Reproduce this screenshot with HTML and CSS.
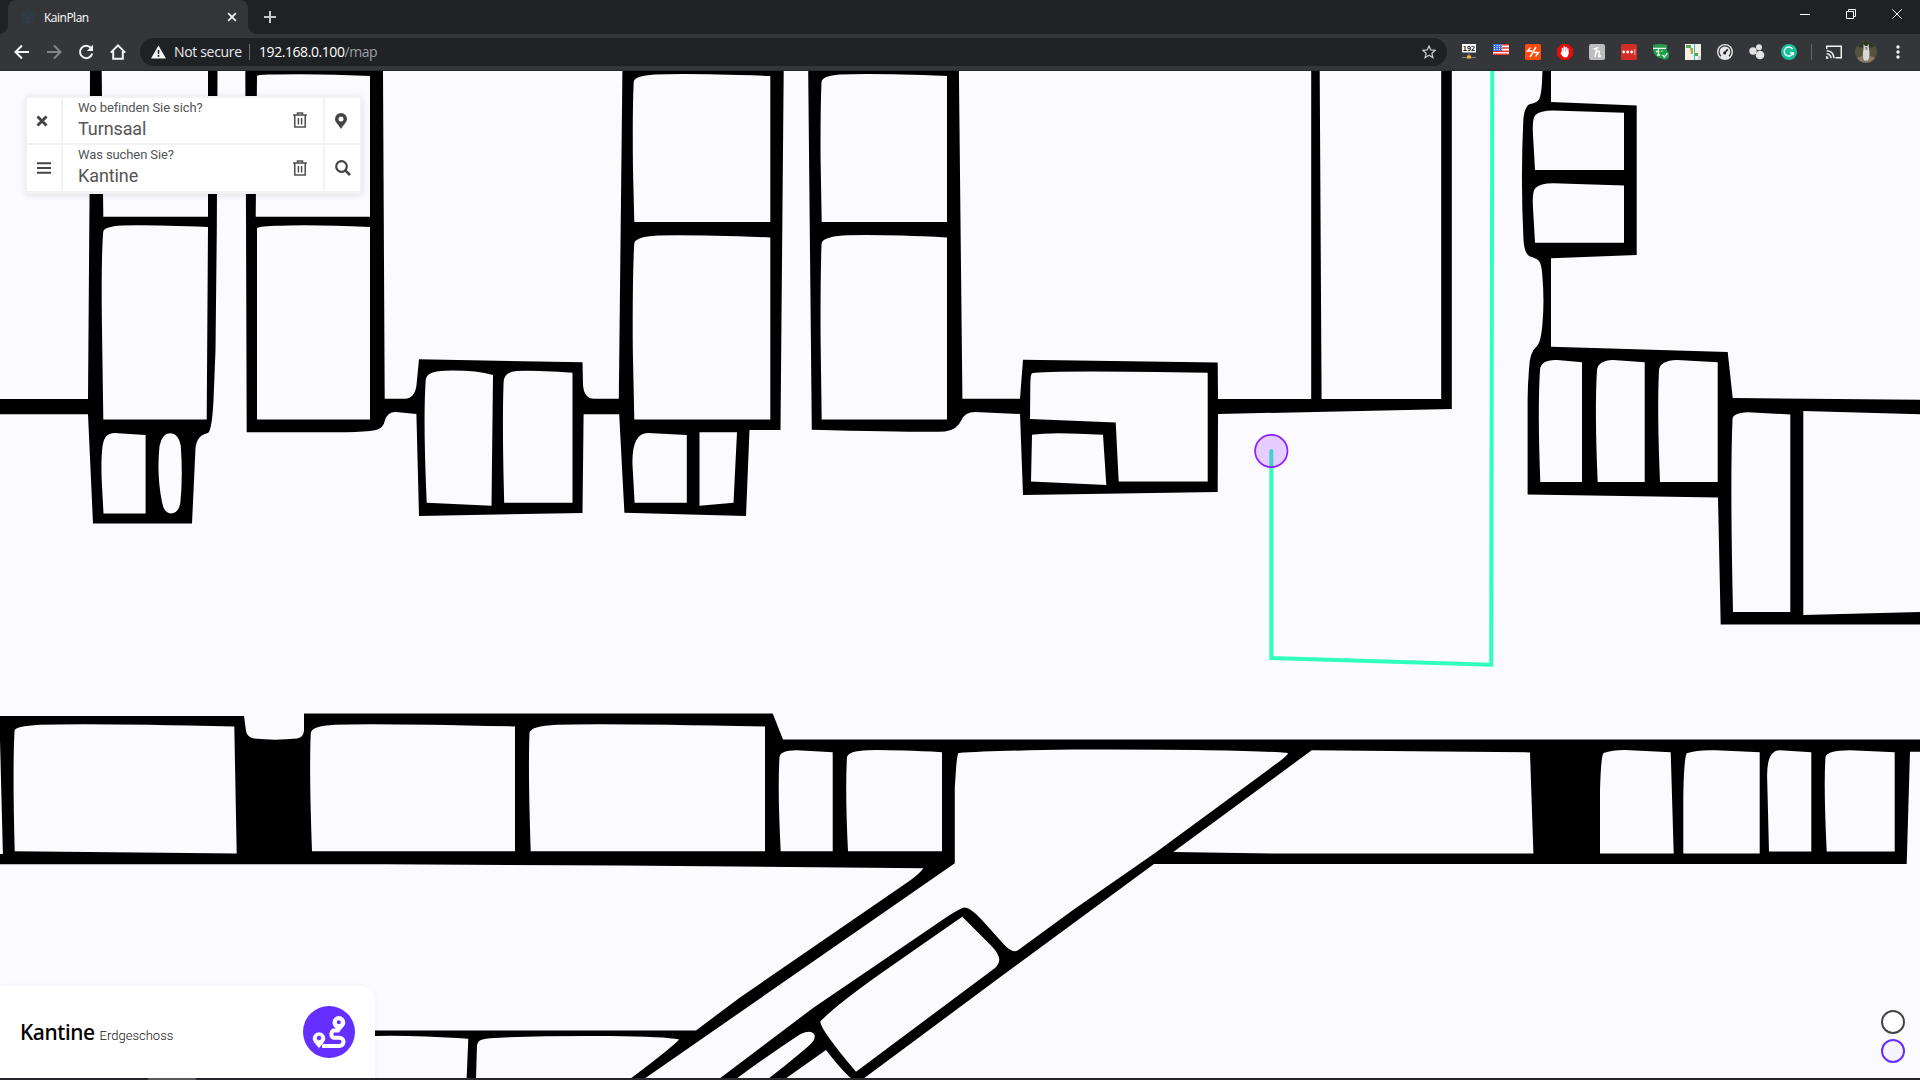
FILE: index.html
```html
<!DOCTYPE html>
<html lang="de">
<head>
<meta charset="utf-8">
<title>KainPlan</title>
<link rel="stylesheet" href="styles.css">
</head>
<body>
<div class="browser">
  <header class="tabstrip">
    <div class="tab">
      <svg class="favicon" width="14" height="14" viewBox="0 0 14 14"><path d="M7 .5 12.6 3.7V10.3L7 13.5 1.4 10.3V3.7Z M1.4 3.7 12 10 M12.6 3.7 2 10 M4 2 8 13 M10 2 6 13"/></svg>
      <span class="tab-title">KainPlan</span>
      <svg class="tab-close" width="10" height="10" viewBox="0 0 10 10"><path d="M1.2 1.2 8.8 8.8M8.8 1.2 1.2 8.8"/></svg>
    </div>
    <svg class="new-tab" width="12" height="12" viewBox="0 0 12 12"><path d="M6 0V12M0 6H12"/></svg>
    <div class="window-controls">
      <span class="control"><svg width="10" height="10"><path d="M0 5.5H10"/></svg></span>
      <span class="control"><svg width="10" height="10"><path d="M.5 2.5H7.5V9.5H.5ZM2.5 2.5V.5H9.5V7.5H7.5"/></svg></span>
      <span class="control"><svg width="10" height="10"><path d="M.3 .3 9.7 9.7M9.7 .3 .3 9.7"/></svg></span>
    </div>
  </header>

  <nav class="toolbar">
    <span class="slot"><svg class="nav-icon" width="16" height="16" viewBox="0 0 16 16"><path d="M15 8H2M8 1.5 1.5 8 8 14.5"/></svg></span>
    <span class="slot"><svg class="nav-icon dim" width="16" height="16" viewBox="0 0 16 16"><path d="M1 8H14M8 1.5 14.5 8 8 14.5"/></svg></span>
    <span class="slot"><svg class="nav-icon" width="16" height="16" viewBox="0 0 16 16"><path d="M13 4A6.2 6.2 0 1 0 14.2 9.5"/><path class="solid" d="M15 .8V7H8.8Z"/></svg></span>
    <span class="slot"><svg class="nav-icon" width="16" height="16" viewBox="0 0 16 16"><path d="M.8 8.6 8 1.4 15.2 8.6M3.2 7V14.8H12.8V7"/></svg></span>
    <div class="address">
      <svg class="warning" width="15" height="14" viewBox="0 0 15 14"><path d="M7.5 .5 15 13.5H0Z"/><path class="mark" d="M7.5 5V8.8M7.5 10V11.8"/></svg>
      <span class="insecure">Not secure</span>
      <span class="divider"></span>
      <span class="url">192.168.0.100<span class="path">/map</span></span>
      <svg class="star" width="14" height="14" viewBox="0 0 14 14"><path d="M7 1 8.8 5 13.2 5.4 9.9 8.3 10.9 12.6 7 10.3 3.1 12.6 4.1 8.3 .8 5.4 5.2 5Z"/></svg>
    </div>
    <span class="slot"><svg width="16" height="16" viewBox="0 0 16 16"><rect x="1" width="14" height="8.5" fill="#fff"/><text class="badge-text" x="8" y="7" text-anchor="middle">192</text><path d="M8 8.5V12M1 13.5H15" stroke="#6d8796"/><rect x="6" y="11.5" width="4" height="3" fill="#f7b51d"/></svg></span>
    <span class="slot"><svg class="flag" width="16" height="16" viewBox="0 0 16 16"><rect width="16" height="11" fill="#fff"/><path d="M0 .8H16M0 4H16M0 7.2H16M0 10.3H16" stroke="#e7352c" stroke-width="1.6"/><rect width="9" height="7" fill="#3d6fe0"/><path d="M1 1.5H9M1 3.5H9M1 5.5H9" stroke="#fff" stroke-width=".9" stroke-dasharray="1 1.5"/></svg></span>
    <span class="slot"><svg width="16" height="16" viewBox="0 0 16 16"><rect width="16" height="16" rx="1.5" fill="#ff4a0c"/><path d="M5.500 3.500 2.500 7H7M11 3 5 13M9 8.500H13.500L10.500 12.500" fill="none" stroke="#fff" stroke-width="1.500"/></svg></span>
    <span class="slot"><svg width="16" height="16" viewBox="0 0 16 16"><path d="M4.700 0H11.300L16 4.700V11.300L11.300 16H4.700L0 11.300V4.700Z" fill="#e50d0d"/><path d="M5.500 9V4.500M7.300 8V3M9.100 8V3.500M10.800 9V5" stroke="#fff" stroke-width="1.500" stroke-linecap="round"/><path d="M4.800 7.500H11.500V10Q11 13.500 8 13.500 5.800 13.300 3.500 9.200Z" fill="#fff"/></svg></span>
    <span class="slot"><svg width="16" height="16" viewBox="0 0 16 16"><rect width="16" height="16" rx="2" fill="#bdbdbd"/><path d="M6 13 8 3M4.500 5.200 9.500 3.600M6.500 9.500Q9 6 10.300 7.500 10.800 9 9.600 12 10 13.300 12 11.500" fill="none" stroke="#fff" stroke-width="1.400"/></svg></span>
    <span class="slot"><svg width="16" height="16" viewBox="0 0 16 16"><rect width="16" height="16" rx="1.500" fill="#d32d27"/><g fill="#fff"><circle cx="2.700" cy="8" r="1.400"/><circle cx="6.700" cy="8" r="1.400"/><circle cx="10.700" cy="8" r="1.400"/><path d="M13.300 5.300H14.300V10.700H13.300Z" opacity=".7"/></g></svg></span>
    <span class="slot"><svg width="16" height="16" viewBox="0 0 16 16"><path d="M0 1Q7-1 14 1V8Q12 13 7 14.500 1 12 0 6Z" fill="#2b9c4b"/><path d="M0 4.300H13M3 7.500H6M8 7.500H11M4 11H9M5.500 5V11" stroke="#e8f7ea" stroke-width="1.300"/><circle cx="11.800" cy="11" r="4.700" fill="#19a04a"/><path d="M9.500 11 11.300 13 14.300 9.300" fill="none" stroke="#fff" stroke-width="1.300"/></svg></span>
    <span class="slot"><svg width="16" height="16" viewBox="0 0 16 16"><rect width="16" height="16" fill="#f3f0e4"/><path d="M1 1H6V4H1ZM10 9H13V12H10Z" fill="#52a852"/><path d="M5 4H8V10H6Z" fill="#baa246"/><path d="M13 12H16V16H13Z" fill="#c5d6df"/><path d="M9.500 0V16" stroke="#20c6d0"/></svg></span>
    <span class="slot"><svg width="16" height="16" viewBox="0 0 16 16"><circle cx="8" cy="8" r="8" fill="#e6e6e6"/><path d="M4 12.300A6 6 0 1 1 12 12.300" fill="none" stroke="#3c3c3c" stroke-width="1.300"/><path d="M7.500 9 10.800 5.200" stroke="#222" stroke-width="1.600"/><circle cx="7.600" cy="9" r="1.500" fill="#222"/></svg></span>
    <span class="slot"><svg class="soft" width="16" height="16" viewBox="0 0 16 16"><circle cx="4" cy="7" r="3.700"/><circle cx="10" cy="3.200" r="3"/><circle cx="11" cy="11" r="4.300"/></svg></span>
    <span class="slot"><svg width="16" height="16" viewBox="0 0 16 16"><circle cx="8" cy="8" r="8" fill="#15c39a"/><path d="M11.500 5A4.500 4.500 0 1 0 12 9H9M12.200 8V11" fill="none" stroke="#fff" stroke-width="1.400"/></svg></span>
    <span class="toolbar-divider"></span>
    <span class="slot"><svg class="cast" width="16" height="14" viewBox="0 0 16 14"><path d="M.7 4V1.200H15.300V12.800H9.500M.7 5.700Q7.500 6 8 13.200M.7 8.700Q4.600 9 5 13.200"/><path class="dot" d="M0 11Q2.300 11 2.500 13.800H0Z"/></svg></span>
    <span class="slot"><svg width="22" height="22" viewBox="0 0 22 22"><circle cx="11" cy="11" r="11" fill="#55523f"/><path d="M2 5A11 11 0 0 1 20 5Q15 8 11 6 6 8 2 5Z" fill="#2c3a25"/><path d="M2 17Q11 12 20 17A11 11 0 0 1 2 17Z" fill="#8a7869"/><path d="M8.500 3 10 5H12.500L13.500 2.500 14 8Q15.500 14 13 19.500H9Q7 14 8.500 8Z" fill="#d9d7d4"/><path d="M9.700 6H12.300V9H10.700Z" fill="#87847f"/></svg></span>
    <span class="slot"><svg class="kebab" width="4" height="14" viewBox="0 0 4 14"><circle cx="2" cy="2" r="1.700"/><circle cx="2" cy="7" r="1.700"/><circle cx="2" cy="12" r="1.700"/></svg></span>
  </nav>

  <main class="viewport">
    <svg class="map" viewBox="0 71 1920 1007" width="1920" height="1007">
      <g class="wall">
        <path d="M0 399H88L89.500 200 90 71H217.500L216.800 230 215.500 350 213.500 400Q212 430 208 433 197 435 195.500 448L192 523.500H93L88 414.200H0Z"/>
        <path d="M245.300 71H383L384.700 398.800H405Q415 398 416.500 385L419 359.300 582.500 362.300 583 385Q584 398.800 594 398.800H618.800L622.400 71H783.700L780.500 430H749.500L746 516 624.400 512.800 619.200 414.200H583.600L582.500 513 419 516 416.400 414 396 412Q388 411.500 385 420 383.500 428 376 430 365 432 346 432.200H246.700L246 215Z"/>
        <path d="M808.200 71H958.900L962.400 398.800H1020L1023 359.700 1217.700 362.500 1218 398.900H1311.200V71H1319.700L1321.600 398.900H1441.200V71H1451.800V409.100L1218 414 1217.700 491.900 1023 495 1020 414 975 412Q965 412 961.500 420 957 430 945 431.500 925 432.500 811.800 429.700Z"/>
        <path d="M1542.400 71Q1542 96 1538.500 100 1536 103 1530 104 1524.500 106 1523.300 120 1520.500 180 1523.500 240 1524.500 254 1530 256.500 1536 258 1539 261 1541.500 264 1542.300 275 1544.500 300 1542.500 323 1541 342 1537 346 1529.500 352 1529 369 1527.700 385 1527.600 400V494.600L1718 497.500 1720.700 624.600H1920V399.700L1732.700 398 1727.700 351.900 1551 346.700V258.200L1636.700 254.900V105.400L1551 102V71Z"/>
        <path d="M0 716H244L246 731Q247 737 254 738.500 275 740.800 297 738.500 304 737 304 730V713.400H772.700L783 739.400H1920V751.700H1910L1906.700 864H1154L1000 977.300 863 1079H645L375 1079V1030.400H696L740 997.500 905 884Q918 875.500 923.500 868.300L620 865.500 385 864.300H0Z"/>
      </g>
      <g class="room">
        <path d="M101.700 71H208V216.800H103.300Z M103.300 419.400 102 330Q101 260 103.200 232 103.500 226.500 122 225.500 145 224.500 208 227L206.700 419.400Z M103.500 513.400 101.700 480Q100.500 445 105 438 108 432.500 118 433.200L145.600 435V513.400Z"/>
        <path d="M170 433.200Q178.500 433.200 180.800 446 183 478 180.300 503 178.500 513.400 171 513.400 164 513.400 162 502 156.500 475 159.500 446 162 433.200 170 433.200Z"/>
        <path d="M257 76Q257 74 275 74.500 320 73.500 370 76V216.800H255.700Z M257 228.500Q257 226.500 275 225.800 310 224 370 227V419.400H257Z"/>
        <path d="M426.700 502.700Q423 420 425.700 380 426.500 371 445 370.700 475 370 493 375L491.500 505.700Z M504.200 502.700Q502 425 503.600 382 504 372 517 371 530 370 572.500 372.700V502.700Z"/>
        <path d="M634.300 222 633 170Q632.300 110 633.700 82 634 76 655 74.600 685 73 770.300 76V222Z M634.300 419.400 632.800 350Q632.300 280 634.200 244 634 237 658 235.500 690 234.500 770.300 237.400V419.400Z M634.600 502.700 632.500 465Q631.500 433 648 433L686.800 435V502.700Z M699.500 432.300H737L733.500 502.700 699.500 505.700Z"/>
        <path d="M821.700 222 820.600 160Q820.300 110 821.500 82 822 76 840 74.600 870 73 947 76V222Z M821.700 419.400 820.600 340Q820.300 280 821.500 244 822 237 843 235.500 875 234 947 237.400V419.400Z"/>
        <path d="M1030 419 1030.300 385Q1030.500 374 1032 373.200 1050 370 1207.700 372.800V481.600H1118.700L1115.700 422.600Z M1031 481.500 1032 434.800Q1050 431.500 1103 434.800L1106.300 485Z"/>
        <path d="M1535 170 1533 135Q1532 118 1535.500 115 1540 110.700 1553 110.500L1624 112.700V170Z M1535 242.700 1533 208Q1532 191 1535.500 188 1540 183.500 1553 183.300L1624 185.500V242.700Z"/>
        <path d="M1540.300 482Q1537.500 410 1540 370 1540.500 359.500 1557 360L1582 362.200V482Z M1597.700 482Q1594.500 410 1597 370 1598 360.500 1613 360L1644.700 362.200V482Z M1660 482Q1657 410 1659 370 1660 360.500 1677 360L1717.700 362.200V482Z"/>
        <path d="M1733 611.900Q1730 480 1732.500 419 1733 413 1748 412.300L1790.300 414.400V611.900Z M1803.300 411 1920 414.200V611.900L1803.300 614.900Z"/>
        <path d="M0 740 2.900 854H0Z M14.700 851.300Q12.500 770 14.500 731 14.500 726 40 724.700 90 723 234.300 726.400L236.700 853.600Z M312 851.300Q309 770 310.800 733 311 726 335 724.700 370 723 515 726.400V851.300Z M530.700 851.300Q528 770 529.500 733 530 726 557 724.700 600 723 765 726.400V851.300Z"/>
        <path d="M780.700 851.300Q777.500 790 779.500 757 780.500 750 797 750.200L832.700 752.200V851.300Z M848 851.300Q845 790 847 757 848 751 868 750.200 890 749.700 942 752.200V851.300Z"/>
        <path d="M954.800 863.300V787L956.300 765Q957.500 753.500 958.500 753 990 750.800 1073 749.500 1240 749 1288 753 1288 755 1280 761L1155 853 1073 910 1019 949.500Q1013 954.500 1004 944.500L981 919Q968 905 962.500 908 955 911 935 925L813 1008 719 1079H644Z"/>
        <path d="M1311.700 750.300 1440 751.500 1530 752.400 1533.400 853.500H1273L1173.300 852Z M1600 853.500V790Q1601 756 1603.500 753 1615 749 1635 750.500L1670.700 752.200 1673.700 853.500Z M1683.300 853.500V795Q1684 758 1686.700 753.200 1698 749.500 1716 750.300L1759.700 752.200V853.500Z M1769 851.400 1767.200 780Q1766 750 1780 750.300L1811.300 752.300V851.400Z M1826.700 851.400Q1823.500 785 1825.500 757 1826.500 750.500 1850 750.200L1894.700 752.300V851.400Z"/>
        <path d="M962.300 916.700 991 945.500Q999.300 954 999.300 960 999 966 991 971L856 1071.700Q820 1029 820.300 1021.500 835 1006 880 974Q930 939 962.300 916.700Z"/>
        <path d="M736 1079Q770 1054 799 1035 810 1029 814 1034 817 1039 808 1046.500 790 1062 768 1079Z M785 1079 826 1050Q843 1072 852 1079Z"/>
        <path d="M375 1036Q410 1035 468.300 1038.700L466.600 1079H375Z M476 1079 477 1045Q477 1039 490 1038.200 540 1035.500 610 1036 665 1036.500 679.300 1039.500 670 1049 630 1079Z"/>
      </g>
      <polyline class="route" points="1271.300,451 1271.300,658 1491.200,664.700 1492.300,60"/>
      <circle class="position" cx="1271.300" cy="451" r="16.200"/>
    </svg>

    <section class="search">
      <button class="cell action cancel"><svg width="12" height="12" viewBox="0 0 12 12"><path d="M1.500 1.500 10.500 10.500M10.500 1.500 1.500 10.500" stroke="#444" stroke-width="2.900"/></svg></button>
      <div class="cell field">
        <div class="entry"><label>Wo befinden Sie sich?</label><span class="value">Turnsaal</span></div>
        <svg class="trash" width="14" height="17" viewBox="0 0 14 17"><path d="M0 3H14M4.500 3V1H9.500V3M1.800 3V15H12.200V3M5.400 6V12.500M8.600 6V12.500"/></svg>
      </div>
      <button class="cell action"><svg width="12" height="16" viewBox="0 0 12 16"><path fill="#444" fill-rule="evenodd" d="M6 0A6 6 0 0 1 12 6C12 9 9 11 6 16 3 11 0 9 0 6A6 6 0 0 1 6 0ZM6 3.500A2.500 2.500 0 1 0 6 8.500 2.500 2.500 0 0 0 6 3.500Z"/></svg></button>
      <button class="cell action"><svg width="14" height="12" viewBox="0 0 14 12"><path d="M0 1.200H14M0 6H14M0 10.800H14" stroke="#444" stroke-width="2"/></svg></button>
      <div class="cell field">
        <div class="entry second"><label>Was suchen Sie?</label><span class="value">Kantine</span></div>
        <svg class="trash" width="14" height="17" viewBox="0 0 14 17"><path d="M0 3H14M4.500 3V1H9.500V3M1.800 3V15H12.200V3M5.400 6V12.500M8.600 6V12.500"/></svg>
      </div>
      <button class="cell action"><svg width="16" height="16" viewBox="0 0 16 16"><circle cx="6.500" cy="6.500" r="5.300" fill="none" stroke="#444" stroke-width="2.200"/><path d="M10.300 10.300 15 15" stroke="#444" stroke-width="2.600"/></svg></button>
    </section>

    <section class="destination">
      <h1>Kantine</h1><span class="floor">Erdgeschoss</span>
      <button class="navigate"><svg width="52" height="52" viewBox="0 0 52 52"><path class="track" d="M35 24.500H30.500A4.200 4.200 0 0 0 30.500 31.800H36.500A4 4 0 0 1 36.500 39.900H19"/><path class="pin" fill-rule="evenodd" d="M35.800 10A6.500 6.500 0 0 1 42.300 16.500C42.300 20.500 38 22.500 35.800 27 33.500 22.500 29.500 20.500 29.500 16.500A6.500 6.500 0 0 1 35.800 10ZM35.800 14.300A2 2 0 1 0 35.800 18.300 2 2 0 0 0 35.800 14.300Z"/><path class="pin edge" fill-rule="evenodd" d="M16 26A6.500 6.500 0 0 1 22.500 32.500C22.500 36 18.500 39 16 42.500 13.500 39 9.500 36 9.500 32.500A6.500 6.500 0 0 1 16 26ZM16 30A2 2 0 1 0 16 34 2 2 0 0 0 16 30Z"/></svg></button>
    </section>

    <div class="floors"><span class="level"></span><span class="level current"></span></div>
  </main>
  <footer class="taskbar"><span class="running"></span></footer>
</div>
</body>
</html>
```
FILE: styles.css
```css
* { box-sizing: border-box; }
body { margin: 0; overflow: hidden; background: #fbfaff; font-family: Roboto, "Liberation Sans", sans-serif; }
svg { display: block; flex: none; }
button { border: 0; padding: 0; }
.browser { width: 1920px; height: 1080px; display: flex; flex-direction: column; }

.tabstrip { height: 34px; flex: none; display: flex; align-items: center; padding-left: 8px; background: #202124; }
.tab { position: relative; width: 240px; height: 34px; padding: 0 11px 0 13px; display: flex; align-items: center; background: #35363a; border-radius: 8px 8px 0 0; }
.tab::before, .tab::after { content: ""; position: absolute; bottom: 0; width: 8px; height: 8px; }
.tab::before { left: -8px; background: radial-gradient(circle at 0 0, #202124 7.5px, #35363a 8px); }
.tab::after { right: -8px; background: radial-gradient(circle at 100% 0, #202124 7.5px, #35363a 8px); }
.favicon path { fill: none; stroke: #2a4152; stroke-width: 1; }
.tab-title { margin-left: 9px; flex: 1; font: 12px "Open Sans", "Noto Sans", sans-serif; letter-spacing: -0.5px; color: #fff; }
.tab-close path { stroke: #f1f3f4; stroke-width: 1.8; }
.new-tab { margin-left: 16px; }
.new-tab path { stroke: #c6c8cb; stroke-width: 2; }
.window-controls { display: flex; margin-left: auto; }
.control { width: 46px; display: flex; justify-content: center; padding-bottom: 6px; }
.control path { fill: none; stroke: #fff; stroke-width: 1; }

.toolbar { height: 37px; flex: none; display: flex; align-items: center; padding: 0 6px 1px; background: #35363a; border-bottom: 1px solid #28292c; }
.slot { width: 32px; flex: none; display: flex; justify-content: center; }
.nav-icon path { fill: none; stroke: #f1f3f4; stroke-width: 2; }
.nav-icon .solid { fill: #f1f3f4; stroke: none; }
.nav-icon.dim path { stroke: #85868a; }
.address { flex: 1; height: 28px; margin: 0 6px; padding: 0 11px; display: flex; align-items: center; border-radius: 14px; background: #202124; font: 14px/20px "Open Sans", "Noto Sans", sans-serif; }
.warning { fill: #f1f3f4; }
.warning .mark { stroke: #202124; stroke-width: 1.6; }
.insecure { width: 75px; margin-left: 8px; letter-spacing: -0.33px; color: #e8eaed; white-space: nowrap; }
.divider { width: 1px; height: 16px; margin: 0 9px 0 0; background: #6b6d71; }
.url { flex: 1; color: #fff; letter-spacing: -0.43px; }
.path { color: #9aa0a6; }
.star path { fill: none; stroke: #c6c8cb; stroke-width: 1.3; }
.badge-text { font: bold 7px "DejaVu Sans Mono", monospace; fill: #222; }
.soft { fill: #e2e2e2; }
.toolbar-divider { width: 1px; height: 16px; margin: 0 6px; background: #66676b; }
.cast path { fill: none; stroke: #f1f3f4; stroke-width: 1.5; }
.cast .dot { fill: #f1f3f4; stroke: none; }
.kebab { fill: #f1f3f4; }

.viewport { position: relative; flex: 1; overflow: hidden; background: #fbfaff; }
.wall { fill: #000; }
.room { fill: #fbfaff; }
.route { fill: none; stroke: #2fffbf; stroke-width: 4; stroke-linecap: round; }
.position { fill: rgba(143, 30, 255, 0.2); stroke: #8c1eff; stroke-width: 1.7; }

.search { position: absolute; left: 26px; top: 25px; width: 336px; height: 98px; padding: 2px 2px 3px 1px; display: grid; grid-template-columns: 34px 260px 35px; grid-template-rows: 45px 46px; gap: 2px; background: #f2f2f2; border-radius: 3px; box-shadow: 0 1px 6px rgba(0, 0, 0, 0.12); }
.cell { background: #fff; display: flex; align-items: center; }
.action { padding-left: 10px; }
.action.cancel { padding-left: 9px; }
.field { padding: 0 16px 0 15px; justify-content: space-between; }
.entry { display: flex; flex-direction: column; color: #555; }
.entry.second { padding-bottom: 2px; }
.entry label { font-size: 13px; line-height: 16px; margin-top: 1px; letter-spacing: -0.1px; }
.value { font-size: 18px; line-height: 26px; letter-spacing: -0.1px; }
.trash path { fill: none; stroke: #505050; stroke-width: 1.5; }

.destination { position: absolute; left: 0; bottom: 0; width: 375px; height: 92px; padding: 0 20px; display: flex; align-items: center; background: #fff; border-radius: 0 14px 0 0; box-shadow: 0 0 5px rgba(0, 0, 0, 0.05); }
.destination h1 { margin: 0; font: 500 21px "Noto Sans", sans-serif; letter-spacing: -0.4px; color: #000; -webkit-text-stroke: 0.1px #000; }
.floor { margin: 6px 0 0 5px; font-size: 13px; font-weight: 300; color: #111; }
.navigate { margin-left: auto; width: 52px; height: 52px; border-radius: 50%; background: #642fff; }
.track { fill: none; stroke: #fff; stroke-width: 4; }
.pin { fill: #fff; }
.pin.edge { stroke: #642fff; stroke-width: 0.6; }

.floors { position: absolute; right: 15px; bottom: 15px; display: flex; flex-direction: column; gap: 5px; }
.level { width: 24px; height: 24px; border: 2px solid #444; border-radius: 50%; background: #fff; }
.level.current { border-color: #642fff; background: #f6f3ff; }

.taskbar { height: 2px; flex: none; background: #26262a; }
.running { display: block; width: 48px; height: 2px; margin-left: 148px; background: #58585b; }
```
